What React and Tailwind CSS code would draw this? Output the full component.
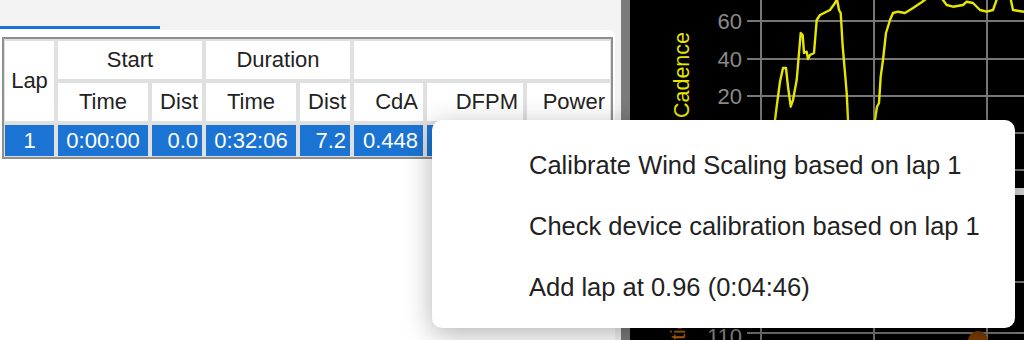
import React from "react";

const yellowPts =
  "773,140 775,120 776.7,106.7 780,81.7 783,68 786,68 788,86.7 790.7,106.7 793,100 796.7,80 799,53 800.7,33 802.7,35 804,53 806.7,51.7 808,59 810,55 814,53 816.7,20 820,15 830,10 835,3 837,-1 839,10 840.7,13 842.7,46.7 845,73 846.7,93 848,120 850,140 873,140 875,120 877,106.7 879,103 880.7,76.7 883,60 886,33 890,20 893,13 898,11.7 905,13 913,8 922,2 930,-4 940,-4 946.7,5 953,6.7 963,5 966.7,1.7 973,3 980,10 986.7,11.7 993,10 998,-4 1010,-4 1013,10 1024,11.7";

function Chart() {
  const hTop = [21, 59, 96, 133, 170];
  const hBottom = [282, 333];
  const vx = [761, 874, 987];
  return (
    <svg width="394" height="340" viewBox="630 0 394 340" className="block">
      <rect x="630" y="0" width="394" height="340" fill="#000" />
      {hTop.map((y) => (
        <line key={y} x1="747" x2="1024" y1={y} y2={y} stroke="#777" strokeWidth="2" />
      ))}
      {vx.map((x) => (
        <line key={x} x1={x} x2={x} y1="0" y2="188" stroke="#777" strokeWidth="2" />
      ))}
      <rect x="630" y="188" width="394" height="7" fill="#d9d9d9" />
      {hBottom.map((y) => (
        <line key={y} x1="747" x2="1024" y1={y} y2={y} stroke="#777" strokeWidth="2" />
      ))}
      {vx.map((x) => (
        <line key={"b" + x} x1={x} x2={x} y1="195" y2="340" stroke="#777" strokeWidth="2" />
      ))}
      <g fontFamily="'Liberation Sans', Arial, sans-serif" fontSize="22" fill="#8a8a8a" textAnchor="end">
        <text x="742" y="29">60</text>
        <text x="742" y="67">40</text>
        <text x="742" y="104">20</text>
        <text x="742" y="141">0</text>
        <text x="742" y="344">110</text>
      </g>
      <text
        transform="translate(689 75) rotate(-90)"
        textAnchor="middle"
        fontFamily="'Liberation Sans', Arial, sans-serif"
        fontSize="21.5"
        fill="#e6e600"
      >
        Cadence
      </text>
      <text
        transform="translate(685 306) rotate(-90)"
        textAnchor="end"
        fontFamily="'Liberation Sans', Arial, sans-serif"
        fontSize="21"
        fill="#b0600a"
      >
        Elevation
      </text>
      <polyline points={yellowPts} fill="none" stroke="#e6e600" strokeWidth="2.4" strokeLinejoin="round" />
      <circle cx="978" cy="341" r="10" fill="#7a3c00" />
    </svg>
  );
}

const cellBase = "bg-white flex items-center text-[22px] leading-none text-[#222]";
const dataBase = "bg-[#1b74d3] flex items-center text-[22px] leading-none text-white";

export default function App() {
  return (
    <div className="relative w-[1024px] h-[340px] overflow-hidden flex font-['Liberation_Sans',Arial,sans-serif]">
      <div className="w-[621px] h-full bg-[#f3f3f3] flex flex-col">
        <div className="h-[30px] flex flex-col justify-end">
          <div className="w-[160px] h-[3px] bg-[#1a73d4] mb-[1px]" />
        </div>
        <div className="flex-1 w-[615px] bg-white rounded-tr-[6px] pt-[7px]">
          <div className="ml-[2px] w-[611px] border-2 border-[#8f8f8f] bg-[#e0e0e0] pt-[2px] px-[1px] pb-[1px]">
            <div className="grid grid-cols-[49px_90px_50px_90px_50px_69px_96px_83px] grid-rows-[38px_38px_31px] gap-[4px]">
              <div className={`${cellBase} row-span-2 justify-center`}>Lap</div>
              <div className={`${cellBase} col-span-2 justify-center`}>Start</div>
              <div className={`${cellBase} col-span-2 justify-center`}>Duration</div>
              <div className={`${cellBase} col-span-3`} />
              <div className={`${cellBase} justify-center`}>Time</div>
              <div className={`${cellBase} justify-end pr-[4px]`}>Dist</div>
              <div className={`${cellBase} justify-center`}>Time</div>
              <div className={`${cellBase} justify-end pr-[4px]`}>Dist</div>
              <div className={`${cellBase} justify-end pr-[5px]`}>CdA</div>
              <div className={`${cellBase} justify-end pr-[5px]`}>DFPM</div>
              <div className={`${cellBase} justify-end pr-[5px]`}>Power</div>
              <div className={`${dataBase} justify-center`}>1</div>
              <div className={`${dataBase} justify-center`}>0:00:00</div>
              <div className={`${dataBase} justify-end pr-[4px]`}>0.0</div>
              <div className={`${dataBase} justify-center`}>0:32:06</div>
              <div className={`${dataBase} justify-end pr-[4px]`}>7.2</div>
              <div className={`${dataBase} justify-end pr-[5px]`}>0.448</div>
              <div className={`${dataBase} justify-end pr-[5px]`} />
              <div className={`${dataBase} justify-end pr-[5px]`} />
            </div>
          </div>
        </div>
      </div>
      <div className="w-[9px] h-full bg-[#7b7b7b]" />
      <div className="flex-1 h-full bg-black">
        <Chart />
      </div>

      <div className="absolute left-[432px] top-[120px] w-[583px] h-[208px] bg-white rounded-[10px] shadow-[0_6px_28px_rgba(0,0,0,0.3)] pt-[15px] pl-[97px] text-[25.5px] text-[#222] leading-none">
        <div className="h-[61px] flex items-center">Calibrate Wind Scaling based on lap 1</div>
        <div className="h-[61px] flex items-center">Check device calibration based on lap 1</div>
        <div className="h-[61px] flex items-center">Add lap at 0.96 (0:04:46)</div>
      </div>
    </div>
  );
}
